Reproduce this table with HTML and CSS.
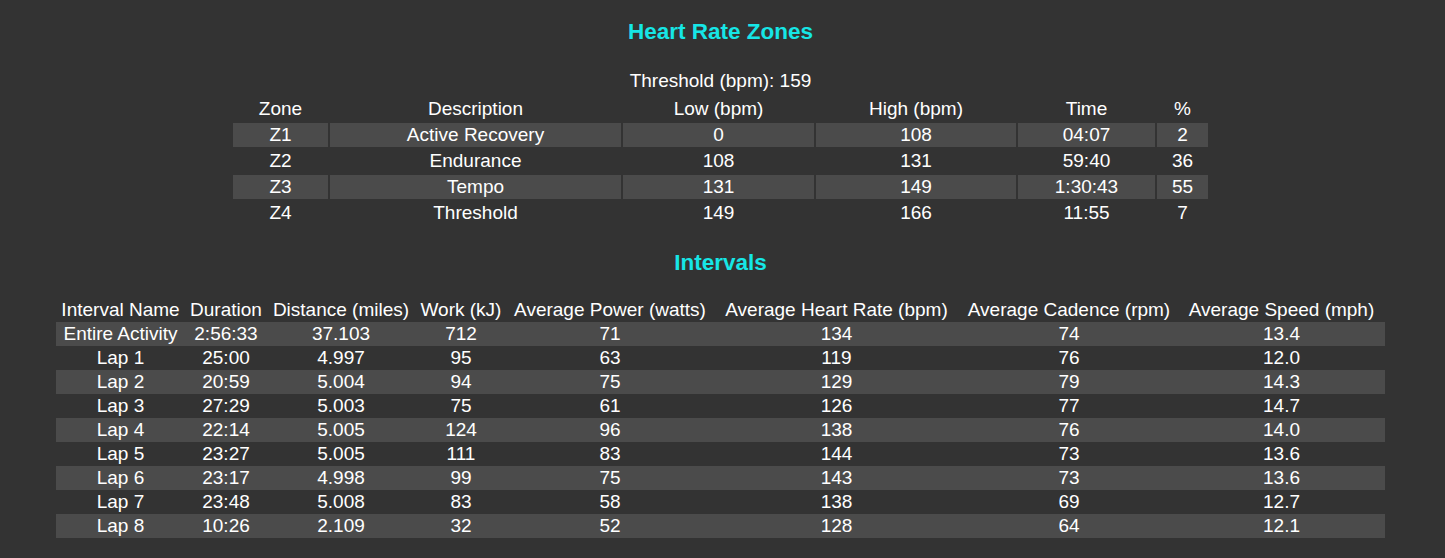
FILE: index.html
```html
<!DOCTYPE html>
<html>
<head>
<meta charset="utf-8">
<link rel="stylesheet" href="styles.css">
</head>
<body>
<div class="page">
  <h3 class="title title-zones">Heart Rate Zones</h3>
  <div class="threshold">Threshold (bpm): 159</div>
  <table class="zones">
    <thead>
      <tr><th class="z-zone">Zone</th><th class="z-desc">Description</th><th class="z-low">Low (bpm)</th><th class="z-high">High (bpm)</th><th class="z-time">Time</th><th class="z-pct">%</th></tr>
    </thead>
    <tbody>
      <tr class="alt"><td>Z1</td><td>Active Recovery</td><td>0</td><td>108</td><td>04:07</td><td>2</td></tr>
      <tr><td>Z2</td><td>Endurance</td><td>108</td><td>131</td><td>59:40</td><td>36</td></tr>
      <tr class="alt"><td>Z3</td><td>Tempo</td><td>131</td><td>149</td><td>1:30:43</td><td>55</td></tr>
      <tr><td>Z4</td><td>Threshold</td><td>149</td><td>166</td><td>11:55</td><td>7</td></tr>
    </tbody>
  </table>

  <h3 class="title title-intervals">Intervals</h3>
  <table class="intervals">
    <thead>
      <tr>
        <th class="i-name">Interval Name</th>
        <th class="i-dur">Duration</th>
        <th class="i-dist">Distance (miles)</th>
        <th class="i-work">Work (kJ)</th>
        <th class="i-pow">Average Power (watts)</th>
        <th class="i-hr">Average Heart Rate (bpm)</th>
        <th class="i-cad">Average Cadence (rpm)</th>
        <th class="i-spd">Average Speed (mph)</th>
      </tr>
    </thead>
    <tbody>
      <tr class="alt"><td>Entire Activity</td><td>2:56:33</td><td>37.103</td><td>712</td><td>71</td><td>134</td><td>74</td><td>13.4</td></tr>
      <tr><td>Lap 1</td><td>25:00</td><td>4.997</td><td>95</td><td>63</td><td>119</td><td>76</td><td>12.0</td></tr>
      <tr class="alt"><td>Lap 2</td><td>20:59</td><td>5.004</td><td>94</td><td>75</td><td>129</td><td>79</td><td>14.3</td></tr>
      <tr><td>Lap 3</td><td>27:29</td><td>5.003</td><td>75</td><td>61</td><td>126</td><td>77</td><td>14.7</td></tr>
      <tr class="alt"><td>Lap 4</td><td>22:14</td><td>5.005</td><td>124</td><td>96</td><td>138</td><td>76</td><td>14.0</td></tr>
      <tr><td>Lap 5</td><td>23:27</td><td>5.005</td><td>111</td><td>83</td><td>144</td><td>73</td><td>13.6</td></tr>
      <tr class="alt"><td>Lap 6</td><td>23:17</td><td>4.998</td><td>99</td><td>75</td><td>143</td><td>73</td><td>13.6</td></tr>
      <tr><td>Lap 7</td><td>23:48</td><td>5.008</td><td>83</td><td>58</td><td>138</td><td>69</td><td>12.7</td></tr>
      <tr class="alt"><td>Lap 8</td><td>10:26</td><td>2.109</td><td>32</td><td>52</td><td>128</td><td>64</td><td>12.1</td></tr>
    </tbody>
  </table>
</div>
</body>
</html>
```

FILE: styles.css
```css
html, body {
  margin: 0;
  padding: 0;
  background: #333333;
}

body {
  font-family: "Liberation Sans", Arial, sans-serif;
  font-size: 19px;
  color: #ffffff;
}

.page {
  padding: 19px 12px 0 8px;
  display: flex;
  flex-direction: column;
  align-items: center;
}

.title {
  margin: 0;
  font-size: 22.5px;
  font-weight: bold;
  line-height: 26px;
  color: #16e6e6;
  text-align: center;
}

.title-zones {
  margin-bottom: 25px;
}

.threshold {
  line-height: 22px;
  text-align: center;
  margin-bottom: 3px;
}

table {
  table-layout: fixed;
  font-size: 19px;
}

th, td {
  padding: 1px;
  text-align: center;
  font-weight: normal;
  line-height: 22px;
  white-space: nowrap;
}

.zones {
  border-spacing: 2px;
  width: 979px;
}

.zones .alt td {
  background: #4b4b4b;
}

.z-zone { width: 93px; }
.z-desc { width: 289px; }
.z-low  { width: 189px; }
.z-high { width: 198px; }
.z-time { width: 135px; }
.z-pct  { width: 49px; }

.title-intervals {
  margin-top: 23px;
  margin-bottom: 22px;
}

.intervals {
  border-collapse: collapse;
  border-spacing: 0;
  width: 1329px;
}

.intervals .alt td {
  background: #4b4b4b;
}

.i-name { width: 127px; }
.i-dur  { width: 80px; }
.i-dist { width: 146px; }
.i-work { width: 90px; }
.i-pow  { width: 204px; }
.i-hr   { width: 245px; }
.i-cad  { width: 216px; }
.i-spd  { width: 205px; }
```
